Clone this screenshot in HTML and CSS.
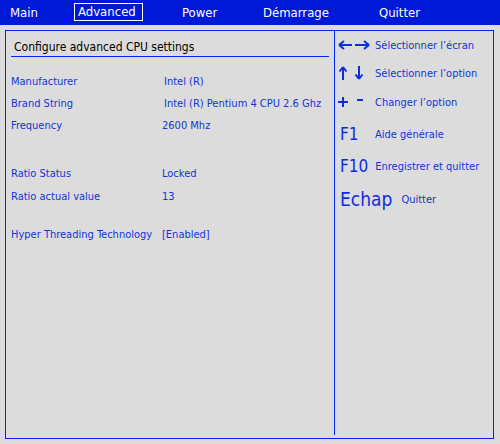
FILE: index.html
```html
<!DOCTYPE html>
<html lang="fr">
<head>
<meta charset="utf-8">
<title>BIOS Setup</title>
<link rel="stylesheet" href="styles.css">
</head>
<body>
<div class="menubar">
  <span class="tab">Main</span>
  <span class="tab tab-active">Advanced</span>
  <span class="tab">Power</span>
  <span class="tab">Démarrage</span>
  <span class="tab">Quitter</span>
</div>
<div class="frame">
  <div class="main">
    <div class="title">Configure advanced CPU settings</div>
    <div class="rows">
      <div class="row r1"><span class="label">Manufacturer</span><span class="value v-shift">Intel (R)</span></div>
      <div class="row r2"><span class="label">Brand String</span><span class="value v-shift">Intel (R) Pentium 4 CPU 2.6 Ghz</span></div>
      <div class="row r3"><span class="label">Frequency</span><span class="value">2600 Mhz</span></div>
      <div class="row r4"><span class="label">Ratio Status</span><span class="value">Locked</span></div>
      <div class="row r5"><span class="label">Ratio actual value</span><span class="value">13</span></div>
      <div class="row r6"><span class="label">Hyper Threading Technology</span><span class="value">[Enabled]</span></div>
    </div>
  </div>
  <div class="help">
    <div class="hrow h1">
      <span class="key">
        <svg class="ico" width="32" height="10" viewBox="0 0 32 10">
          <path d="M2 5 H14" stroke="currentColor" stroke-width="2"/>
          <path d="M1 5 L6 1 M1 5 L6 9" stroke="currentColor" stroke-width="2" fill="none"/>
          <path d="M17 5 H30" stroke="currentColor" stroke-width="2"/>
          <path d="M31 5 L26 1 M31 5 L26 9" stroke="currentColor" stroke-width="2" fill="none"/>
        </svg>
      </span>
      <span class="desc">Sélectionner l’écran</span>
    </div>
    <div class="hrow h2">
      <span class="key">
        <svg class="ico" width="28" height="14" viewBox="0 0 28 14">
          <path d="M5 2 V14" stroke="currentColor" stroke-width="2"/>
          <path d="M5 1 L1.5 5.5 M5 1 L8.5 5.5" stroke="currentColor" stroke-width="2" fill="none"/>
          <path d="M21 0 V12" stroke="currentColor" stroke-width="2"/>
          <path d="M21 13 L17.5 8.5 M21 13 L24.5 8.5" stroke="currentColor" stroke-width="2" fill="none"/>
        </svg>
      </span>
      <span class="desc">Sélectionner l’option</span>
    </div>
    <div class="hrow h3">
      <span class="key">
        <svg class="ico" width="28" height="14" viewBox="0 0 28 14">
          <path d="M0 7 H10 M5 2 V12" stroke="currentColor" stroke-width="2"/>
          <path d="M19 5 H25" stroke="currentColor" stroke-width="2"/>
        </svg>
      </span>
      <span class="desc">Changer l’option</span>
    </div>
    <div class="hrow h4"><span class="key key-big">F1</span><span class="desc">Aide générale</span></div>
    <div class="hrow h5"><span class="key key-big">F10</span><span class="desc">Enregistrer et quitter</span></div>
    <div class="hrow h6"><span class="key key-huge">Echap</span><span class="desc">Quitter</span></div>
  </div>
</div>
</body>
</html>
```

FILE: styles.css
```css
html, body {
  margin: 0;
  padding: 0;
  background: #dcdcdc;
  width: 500px;
  height: 444px;
  overflow: hidden;
  font-family: "DejaVu Sans Condensed", "DejaVu Sans", sans-serif;
}

.menubar {
  height: 25px;
  background: #0019d6;
  display: grid;
  grid-template-columns: 64px 108px 81px 116px auto;
  align-items: center;
  padding-left: 10px;
  box-sizing: border-box;
  color: #ffffff;
  font-size: 13px;
}

.tab {
  justify-self: start;
  line-height: 16px;
}

.tab-active {
  border: 1px solid #ffffff;
  padding: 0 6px 0 3px;
  line-height: 16px;
  margin-top: -1px;
}

.frame {
  margin: 5px 0 0 5px;
  width: 489px;
  height: 409px;
  box-sizing: border-box;
  border: 1px solid #0022ff;
  display: grid;
  grid-template-columns: 328px 1fr;
}

.main {
  padding: 7px 5px 0 5px;
}

.title {
  font-size: 12px;
  color: #000000;
  line-height: 18px;
  padding-left: 3px;
  border-bottom: 1px solid #0022ff;
}

.rows {
  color: #1234d8;
  font-size: 11px;
}

.row {
  display: grid;
  grid-template-columns: 151px auto;
  line-height: 22px;
  height: 22px;
}

.r1 { margin-top: 14px; }
.r4 { margin-top: 26px; }
.r5 { margin-top: 1px; }
.r6 { margin-top: 16px; }

.v-shift { padding-left: 2px; }

.help {
  border-left: 1px solid #0022ff;
  margin-bottom: 3px;
  color: #1234d8;
  padding: 3px 0 0 3px;
}

.hrow {
  display: flex;
  align-items: center;
}

.key {
  min-width: 37px;
  display: flex;
  align-items: center;
  color: #0b2ee0;
}

.key-big {
  font-size: 17px;
  min-width: 28px;
  padding-left: 2px;
  margin-right: 7px;
}

.key-huge {
  font-size: 19px;
  padding-left: 2px;
  margin-right: 9px;
}

.desc {
  font-size: 11px;
}

.h1 { height: 22px; }
.h2 { height: 22px; margin-top: 6px; }
.h3 { height: 22px; margin-top: 7px; }
.h4 { height: 24px; margin-top: 9px; }
.h5 { height: 24px; margin-top: 8px; }
.h6 { height: 28px; margin-top: 7px; }

.ico {
  display: block;
}
```
